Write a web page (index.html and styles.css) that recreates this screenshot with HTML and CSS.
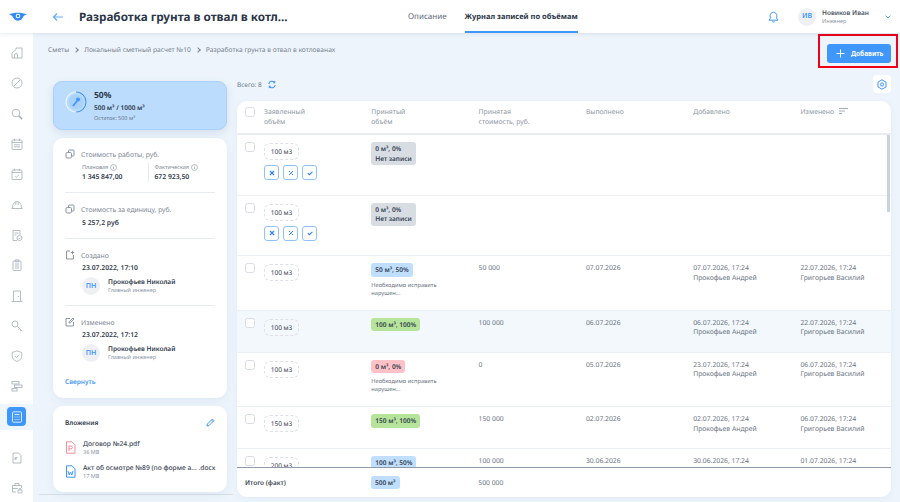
FILE: index.html
```html
<!DOCTYPE html>
<html lang="ru">
<head>
    <meta charset="UTF-8">
    <meta name="viewport" content="width=device-width, initial-scale=1.0">
    <title>Журнал записей по объёмам</title>
    <link rel="stylesheet" href="styles.css">
</head>
<body>

    <svg class="sprite" xmlns="http://www.w3.org/2000/svg">
        <symbol id="i-coins" viewBox="0 0 10 10"><rect x="1" y="3.5" width="5.5" height="5.5" rx="1.2" fill="none" stroke="currentColor"/><path d="M3.5 3V1.8q0-.8.8-.8h3.9q.8 0 .8.8v4.4q0 .8-.8.8H7" fill="none" stroke="currentColor"/></symbol>
        <symbol id="i-info" viewBox="0 0 8 8"><circle cx="4" cy="4" r="3.4" fill="none" stroke="currentColor" stroke-width=".7"/><path d="M4 3.5v2.4M4 2v.8" stroke="currentColor" stroke-width=".8"/></symbol>
        <symbol id="i-x" viewBox="0 0 8 8"><path d="M2 2l4 4M6 2L2 6" stroke="currentColor" stroke-width="1.2" fill="none"/></symbol>
        <symbol id="i-x2" viewBox="0 0 8 8"><path d="M2 2l1.3 1.3M6 6L4.7 4.7M6 2L2 6" stroke="currentColor" stroke-width="1" fill="none"/></symbol>
        <symbol id="i-ok" viewBox="0 0 8 8"><path d="M1.8 4.2l1.6 1.5L6.4 2.8" stroke="currentColor" stroke-width="1.1" fill="none"/></symbol>
    </svg>

    <div class="app">
        <!-- Шапка -->
        <header class="topbar">
            <div class="logo">
                <svg width="18" height="10" viewBox="0 0 18 10"><path d="M0 2.5C4 0 13 0 18 2.5 15 3 14.500 4 13.500 6 11.500 9.500 6.500 9.500 4.500 6 3.500 4 2.500 3 0 2.500z" fill="#2f8cf5"/><circle cx="9" cy="4" r="2.300" fill="#fff"/><circle cx="9" cy="4" r="1.300" fill="#2f8cf5"/></svg>
            </div>
            <svg class="back" width="12" height="10" viewBox="0 0 12 10"><path d="M11 5H1.500M5 1.500L1.500 5 5 8.500" fill="none" stroke="#62a9fb" stroke-width="1.200"/></svg>
            <h1 class="page-title">Разработка грунта в отвал в котл...</h1>
            <nav class="tabs">
                <a class="tab">Описание</a>
                <a class="tab tab-active">Журнал записей по объёмам</a>
            </nav>
            <svg class="bell" width="11" height="12" viewBox="0 0 11 12"><path d="M1 9.200h9L8.800 7.500V4.600C8.800 2.600 7.300 1.300 5.500 1.300S2.200 2.600 2.200 4.600v2.900zM4.200 10.600q1.300 1 2.600 0" fill="none" stroke="#3f96fb" stroke-width="1"/></svg>
            <div class="avatar">ИВ</div>
            <div class="user">
                <div class="user-name">Новиков Иван</div>
                <div class="user-role">Инженер</div>
            </div>
            <svg class="chev" width="6" height="4" viewBox="0 0 6 4"><path d="M.6.8L3 3 5.400.8" fill="none" stroke="#3f96fb" stroke-width="1"/></svg>
        </header>

        <div class="workspace">
            <!-- Боковое меню -->
            <aside class="sidebar">
                <div class="side-item"><svg viewBox="0 0 12 12"><path d="M1 6l4-3.500V1h6v10H1zM3.500 11V8q0-1.500 1.500-1.500T6.500 8v3"/></svg></div>
                <div class="side-item"><svg viewBox="0 0 12 12"><circle cx="6" cy="6" r="5"/><path d="M3 9l6-6"/></svg></div>
                <div class="side-item"><svg viewBox="0 0 12 12"><circle cx="5" cy="5" r="3.800"/><path d="M7.800 7.800l3.300 3.300" stroke-width="1.500"/></svg></div>
                <div class="side-item"><svg viewBox="0 0 12 12"><rect x="1" y="2" width="10" height="9.500" rx="1"/><path d="M1 4.500h10M3.500.8v2M8.500.8v2M3 6.800h6M3 8.800h6"/></svg></div>
                <div class="side-item"><svg viewBox="0 0 12 12"><rect x="1" y="2" width="10" height="9.500" rx="1"/><path d="M1 4.500h10M3.500.8v2M8.500.8v2M4 7.800l1.500 1.400L8 6.800"/></svg></div>
                <div class="side-item"><svg viewBox="0 0 12 12"><path d="M.5 9.500h11M1.500 9.500C1.500 5 3.500 2.500 6 2.500s4.500 2.500 4.500 7M4.800 2.800V6M7.200 2.800V6"/></svg></div>
                <div class="side-item"><svg viewBox="0 0 12 12"><path d="M6 11.500H2V1.500h7V6M3.500 4h4M3.500 6h2"/><circle cx="8.500" cy="9" r="2.500"/><path d="M7.500 9l.8.800 1.200-1.200"/></svg></div>
                <div class="side-item"><svg viewBox="0 0 12 12"><rect x="2" y="2" width="8" height="9.500" rx="1"/><rect x="4" y=".8" width="4" height="2" rx=".5"/><path d="M3.800 5h4.400M3.800 7h4.400M3.800 9h4.400"/></svg></div>
                <div class="side-item"><svg viewBox="0 0 12 12"><path d="M.5 11.500h11M2.500 11.500V1h7v10.500M7.500 6v1"/></svg></div>
                <div class="side-item"><svg viewBox="0 0 12 12"><circle cx="4" cy="4" r="3"/><path d="M6.200 6.200l5 5M8.500 8.500l-1.200 1.200M10 10l-1 1"/></svg></div>
                <div class="side-item"><svg viewBox="0 0 12 12"><path d="M6 .8l4.800 1.700V6c0 2.800-2.200 4.500-4.800 5.500C3.400 10.500 1.200 8.800 1.200 6V2.500zM4 6l1.500 1.500L8 4.800"/></svg></div>
                <div class="side-item"><svg viewBox="0 0 12 12"><rect x="1" y="1.500" width="7" height="2.500"/><rect x="3.500" y="5" width="7.500" height="2.500"/><rect x="1" y="8.500" width="5" height="2.500"/></svg></div>
                <div class="side-item side-active"><span class="side-btn"><svg viewBox="0 0 12 12"><rect x="1.500" y=".8" width="9" height="10.400" rx="1"/><path d="M3.500 3.500h5M3.500 6h1M5.500 6h1M7.500 6h1M3.500 8.500h1M5.500 8.500h1M7.500 8.500h1"/></svg></span></div>
                <div class="side-sep"></div>
                <div class="side-item"><svg viewBox="0 0 12 12"><path d="M2 1h5.500L10 3.500V11H2zM4 8V5.500h2.500M4 7h2"/></svg></div>
                <div class="side-item"><svg viewBox="0 0 12 12"><path d="M5 10H1.500V3.500h9V6M4 3.500V1.500h4v2M1.500 6.500H7"/><rect x="7" y="8" width="4" height="3" rx=".5"/><path d="M8 8V7q1-1.500 2 0v1"/></svg></div>
            </aside>

            <main class="content">
                <div class="content-top">
                    <div class="crumbs">
                        <span>Сметы</span><i class="crumb-sep"></i>
                        <span>Локальный сметный расчет №10</span><i class="crumb-sep"></i>
                        <span>Разработка грунта в отвал в котлованах</span>
                    </div>
                    <div class="add-wrap">
                        <button class="btn-add"><svg width="9" height="9" viewBox="0 0 9 9"><path d="M4.500.5v8M.5 4.500h8" stroke="#fff" stroke-width="1"/></svg>Добавить</button>
                        <span class="add-mark"></span>
                    </div>
                </div>

                <div class="columns">
                    <!-- Левая колонка -->
                    <section class="left">
                        <div class="progress-card">
                            <div class="ring">
                                <svg width="22" height="22" viewBox="0 0 22 22">
                                    <circle cx="11" cy="11" r="10" fill="none" stroke="#e8f3ff" stroke-width="1.200"/>
                                    <path d="M11 1a10 10 0 0 1 0 20" fill="none" stroke="#3f96fb" stroke-width="1.200"/>
                                    <circle cx="11" cy="11" r="7.500" fill="#a9d1fb"/>
                                    <path d="M8 15l4-5" stroke="#3f96fb" stroke-width="1.800"/>
                                    <circle cx="13" cy="8.500" r="2" fill="#3f96fb"/>
                                </svg>
                            </div>
                            <div>
                                <div class="progress-pct">50%</div>
                                <div class="progress-vol">500 м³ / 1000 м³</div>
                                <div class="progress-rest">Остаток: 500 м³</div>
                            </div>
                        </div>

                        <div class="info-card">
                            <div class="info-block">
                                <div class="info-head"><svg class="info-icon"><use href="#i-coins"/></svg>Стоимость работы, руб.</div>
                                <div class="cost-split">
                                    <div class="cost-col">
                                        <div class="cost-label">Плановая <svg class="hint"><use href="#i-info"/></svg></div>
                                        <div class="info-value">1 345 847,00</div>
                                    </div>
                                    <div class="cost-col cost-col-fact">
                                        <div class="cost-label">Фактическая <svg class="hint"><use href="#i-info"/></svg></div>
                                        <div class="info-value">672 923,50</div>
                                    </div>
                                </div>
                            </div>
                            <div class="info-block">
                                <div class="info-head"><svg class="info-icon"><use href="#i-coins"/></svg>Стоимость за единицу, руб.</div>
                                <div class="info-value info-indent">5 257,2 руб</div>
                            </div>
                            <div class="info-block">
                                <div class="info-head"><svg class="info-icon" viewBox="0 0 10 10"><path d="M5 1H1.500v8h7V5M7.500.8v3.500M5.800 2.500h3.400" fill="none" stroke="currentColor"/></svg>Создано</div>
                                <div class="info-value info-indent">23.07.2022, 17:10</div>
                                <div class="person">
                                    <div class="avatar">ПН</div>
                                    <div>
                                        <div class="person-name">Прокофьев Николай</div>
                                        <div class="person-role">Главный инженер</div>
                                    </div>
                                </div>
                            </div>
                            <div class="info-block">
                                <div class="info-head"><svg class="info-icon" viewBox="0 0 10 10"><path d="M5 1.500H1v7.500h7.500V5M4 6l.3-1.500L8 1l1 1-3.500 3.700z" fill="none" stroke="currentColor"/></svg>Изменено</div>
                                <div class="info-value info-indent">23.07.2022, 17:12</div>
                                <div class="person">
                                    <div class="avatar">ПН</div>
                                    <div>
                                        <div class="person-name">Прокофьев Николай</div>
                                        <div class="person-role">Главный инженер</div>
                                    </div>
                                </div>
                            </div>
                            <a class="collapse">Свернуть</a>
                        </div>

                        <div class="files-card">
                            <div class="files-head">
                                <span>Вложения</span>
                                <svg width="9" height="9" viewBox="0 0 9 9"><path d="M1 8l.4-2L6.300 1.100 7.900 2.700 3 7.600zM5.500 2l1.600 1.600" fill="none" stroke="#3f96fb" stroke-width="1"/></svg>
                            </div>
                            <div class="file">
                                <svg class="file-icon" viewBox="0 0 11 13"><path d="M1.500.8h5.500L10 3.800v8.400H1.500z" fill="#fff" stroke="#f78f9a"/><path d="M4 10V5h2q1.300 0 1.300 1.400T6 7.800H4" fill="none" stroke="#f78f9a"/></svg>
                                <div>
                                    <div class="file-name">Договор №24.pdf</div>
                                    <div class="file-size">36 MB</div>
                                </div>
                            </div>
                            <div class="file">
                                <svg class="file-icon" viewBox="0 0 11 13"><path d="M1.500.8h5.500L10 3.800v8.400H1.500z" fill="#fff" stroke="#3f96fb"/><path d="M3 6l1.200 4 1.300-3 1.300 3L8 6" fill="none" stroke="#3f96fb"/></svg>
                                <div>
                                    <div class="file-name">Акт об осмотре №89 (по форме а... .docx</div>
                                    <div class="file-size">17 MB</div>
                                </div>
                            </div>
                        </div>
                    </section>

                    <!-- Журнал -->
                    <section class="right">
                        <div class="right-top">
                            <div class="total-line">
                                <span>Всего: 8</span>
                                <svg width="8" height="9" viewBox="0 0 8 9"><path d="M.8 4A3.300 3.300 0 0 1 6.600 2.400M7.200 5A3.300 3.300 0 0 1 1.400 6.600" fill="none" stroke="#3f96fb" stroke-width="1.100"/><path d="M7.200.6v2.600H4.800M.8 8.400V5.800h2.400" fill="#3f96fb"/></svg>
                            </div>
                            <button class="btn-settings">
                                <svg width="10" height="11" viewBox="0 0 10 11"><path d="M5 .8l4 2.300v4.800l-4 2.300-4-2.300V3.100z" fill="none" stroke="#3f96fb" stroke-width="1"/><circle cx="5" cy="5.500" r="1.600" fill="none" stroke="#3f96fb" stroke-width="1"/></svg>
                            </button>
                        </div>

                        <div class="journal">
                            <div class="row row-head">
                                <span class="check"></span>
                                <div>Заявленный<br>объём</div>
                                <div>Принятый<br>объём</div>
                                <div>Принятая<br>стоимость, руб.</div>
                                <div>Выполнено</div>
                                <div>Добавлено</div>
                                <div>Изменено <svg class="sort" width="9" height="7" viewBox="0 0 9 7"><path d="M0 .5h9M0 3h6M0 5.500h3" stroke="#9aa3b0" stroke-width=".9"/></svg></div>
                            </div>

                            <div class="rows">
                                <div class="row row-actions">
                                    <span class="check"></span>
                                    <div>
                                        <span class="declared">100 м3</span>
                                        <div class="actions">
                                            <span class="act"><svg><use href="#i-x"/></svg></span>
                                            <span class="act"><svg><use href="#i-x2"/></svg></span>
                                            <span class="act"><svg><use href="#i-ok"/></svg></span>
                                        </div>
                                    </div>
                                    <div><span class="pill pill-gray">0 м³, 0%<br>Нет записи</span></div>
                                    <div></div><div></div><div></div><div></div>
                                </div>
                                <div class="row row-actions">
                                    <span class="check"></span>
                                    <div>
                                        <span class="declared">100 м3</span>
                                        <div class="actions">
                                            <span class="act"><svg><use href="#i-x"/></svg></span>
                                            <span class="act"><svg><use href="#i-x2"/></svg></span>
                                            <span class="act"><svg><use href="#i-ok"/></svg></span>
                                        </div>
                                    </div>
                                    <div><span class="pill pill-gray">0 м³, 0%<br>Нет записи</span></div>
                                    <div></div><div></div><div></div><div></div>
                                </div>
                                <div class="row row-note">
                                    <span class="check"></span>
                                    <div><span class="declared">100 м3</span></div>
                                    <div><span class="pill pill-blue">50 м³, 50%</span><p class="note">Необходимо исправить<br>нарушен...</p></div>
                                    <div>50 000</div>
                                    <div>07.07.2026</div>
                                    <div>07.07.2026, 17:24<br>Прокофьев Андрей</div>
                                    <div>22.07.2026, 17:24<br>Григорьев Василий</div>
                                </div>
                                <div class="row row-plain row-hover">
                                    <span class="check"></span>
                                    <div><span class="declared">100 м3</span></div>
                                    <div><span class="pill pill-green">100 м³, 100%</span></div>
                                    <div>100 000</div>
                                    <div>06.07.2026</div>
                                    <div>06.07.2026, 17:24<br>Прокофьев Андрей</div>
                                    <div>22.07.2026, 17:24<br>Григорьев Василий</div>
                                </div>
                                <div class="row row-note">
                                    <span class="check"></span>
                                    <div><span class="declared">100 м3</span></div>
                                    <div><span class="pill pill-red">0 м³, 0%</span><p class="note">Необходимо исправить<br>нарушен...</p></div>
                                    <div>0</div>
                                    <div>05.07.2026</div>
                                    <div>23.07.2026, 17:24<br>Прокофьев Андрей</div>
                                    <div>06.07.2026, 17:24<br>Григорьев Василий</div>
                                </div>
                                <div class="row row-plain">
                                    <span class="check"></span>
                                    <div><span class="declared">150 м3</span></div>
                                    <div><span class="pill pill-green">150 м³, 100%</span></div>
                                    <div>150 000</div>
                                    <div>02.07.2026</div>
                                    <div>02.07.2026, 17:24<br>Прокофьев Андрей</div>
                                    <div>06.07.2026, 17:24<br>Григорьев Василий</div>
                                </div>
                                <div class="row row-plain">
                                    <span class="check"></span>
                                    <div><span class="declared">200 м3</span></div>
                                    <div><span class="pill pill-blue">100 м³, 50%</span></div>
                                    <div>100 000</div>
                                    <div>30.06.2026</div>
                                    <div>30.06.2026, 17:24</div>
                                    <div>01.07.2026, 17:24</div>
                                </div>
                                <span class="scroll-thumb"></span>
                            </div>

                            <div class="row row-foot">
                                <span></span>
                                <div class="foot-label">Итого (факт)</div>
                                <div></div>
                                <div><span class="pill pill-blue">500 м³</span></div>
                                <div>500 000</div>
                                <div></div><div></div><div></div>
                            </div>
                        </div>
                    </section>
                </div>
            </main>
        </div>
    </div>

</body>
</html>
```

FILE: styles.css
```css
* {
    box-sizing: border-box;
}
html, body {
    margin: 0;
    height: 100%;
    overflow: hidden;
}
body {
    font-family: "Noto Sans", "Open Sans", sans-serif;
    font-size: 7px;
    color: #2b3648;
    background-color: #edf4fb;
    text-rendering: geometricPrecision;
}
.sprite {
    display: none;
}
.app {
    display: flex;
    flex-direction: column;
    height: 502px;
}

/* Шапка */
.topbar {
    position: relative;
    z-index: 2;
    display: flex;
    align-items: center;
    flex: none;
    height: 33px;
    background-color: #fff;
    box-shadow: 0 1px 4px rgba(60, 80, 110, 0.12);
}
.logo {
    display: flex;
    width: 52px;
    padding-left: 9px;
}
.back {
    flex: none;
    margin-right: 15px;
}
.page-title {
    width: 329px;
    margin: 0;
    font-size: 11.700px;
    font-weight: 700;
    color: #2b3648;
    white-space: nowrap;
}
.tabs {
    display: flex;
    align-self: stretch;
    gap: 18px;
    width: 360px;
}
.tab {
    display: flex;
    align-items: center;
    font-size: 8px;
    color: #5b6676;
    border-bottom: 2px solid transparent;
    padding-top: 2px;
}
.tab-active {
    font-size: 7.500px;
    font-weight: 700;
    color: #2b3648;
    border-bottom-color: #3f96fb;
}
.bell {
    flex: none;
    margin-right: 19px;
}
.avatar {
    display: flex;
    align-items: center;
    justify-content: center;
    flex: none;
    width: 18px;
    height: 18px;
    border-radius: 50%;
    font-size: 7px;
    font-weight: 600;
    color: #3f96fb;
    background-color: #eef0f4;
}
.user {
    width: 63px;
    margin-left: 6px;
}
.user-name {
    font-size: 6.500px;
    font-weight: 600;
    line-height: 9px;
    color: #47505f;
}
.user-role {
    font-size: 5.500px;
    line-height: 9px;
    color: #8c95a3;
}

/* Боковое меню */
.workspace {
    display: flex;
    flex: 1;
    min-height: 0;
}
.sidebar {
    display: flex;
    flex-direction: column;
    align-items: stretch;
    flex: none;
    width: 33px;
    padding-top: 5px;
    background-color: #fff;
}
.side-item {
    display: flex;
    align-items: center;
    justify-content: center;
    flex: none;
    height: 30.300px;
}
.side-item svg {
    width: 12px;
    height: 12px;
    fill: none;
    stroke: #a3adba;
    stroke-width: 0.800;
}
.side-active {
    height: 26px;
    margin: 2px 0;
    background-color: #eef5fc;
}
.side-btn {
    display: flex;
    align-items: center;
    justify-content: center;
    width: 19px;
    height: 19px;
    border-radius: 4px;
    background-color: #3f96fb;
}
.side-btn svg {
    stroke: #fff;
}
.side-sep {
    height: 1px;
    margin: 6px 0 5px;
    background-color: #e3e7ec;
}

.content {
    flex: 1;
    min-width: 0;
    padding: 11px 9px 5px 6px;
}
.content-top {
    display: flex;
    justify-content: space-between;
    height: 19px;
    padding-left: 9px;
}
.crumbs {
    display: flex;
    align-items: center;
    height: 11px;
    font-size: 6.700px;
    color: #78828f;
}
.crumb-sep {
    width: 4px;
    height: 4px;
    margin: 0 6px 0 5px;
    border-top: 0.800px solid #78828f;
    border-right: 0.800px solid #78828f;
    transform: rotate(45deg);
}
.add-wrap {
    position: relative;
}
.btn-add {
    display: flex;
    align-items: center;
    gap: 6px;
    width: 64px;
    height: 19px;
    padding: 0 0 0 9px;
    border: none;
    border-radius: 3px;
    font-family: inherit;
    font-size: 6.500px;
    font-weight: 700;
    color: #fff;
    background-color: #3f96fb;
}
.add-mark {
    position: absolute;
    left: -9px;
    top: -10px;
    width: 80px;
    height: 34px;
    border: 2px solid #ee0018;
}
.columns {
    display: flex;
    gap: 4px;
    margin-top: 12px;
}

/* Левая колонка */
.left {
    flex: none;
    width: 194px;
    height: 420px;
    padding: 6px 6px 0 14px;
    border-bottom: 1px solid #d9dee5;
}
.progress-card {
    display: flex;
    align-items: center;
    gap: 7px;
    height: 49px;
    padding-left: 11px;
    border: 1px solid #a9d1fb;
    border-radius: 9px;
    background-color: #bcdcfd;
    box-shadow: 0 3px 8px rgba(70, 110, 170, 0.15);
}
.ring {
    display: flex;
    flex: none;
    margin-bottom: 8px;
}
.progress-pct {
    font-size: 8.500px;
    font-weight: 700;
    line-height: 12px;
}
.progress-vol {
    font-size: 6.500px;
    font-weight: 600;
    line-height: 12px;
}
.progress-rest {
    font-size: 5.500px;
    line-height: 8px;
    color: #68778c;
}
.info-card,
.files-card {
    margin-top: 8px;
    padding: 0 12px;
    border-radius: 10px;
    background-color: #fff;
    box-shadow: 0 3px 8px rgba(70, 110, 170, 0.08);
}
.info-card {
    height: 260px;
    padding-top: 11px;
}
.info-block {
    padding-bottom: 10px;
    margin-bottom: 11px;
    border-bottom: 1px solid #e8ebef;
}
.info-block:nth-child(3) {
    padding-bottom: 10px;
}
.info-block:nth-child(4) {
    padding-bottom: 0;
    border-bottom: none;
}
.info-head {
    display: flex;
    align-items: center;
    gap: 6px;
    height: 10px;
    font-size: 6.800px;
    color: #7d8694;
}
.info-icon {
    flex: none;
    width: 10px;
    height: 10px;
    color: #8b95a3;
}
.info-value {
    margin-top: 3px;
    font-size: 6.800px;
    font-weight: 600;
    line-height: 10px;
    color: #2f3a4b;
}
.info-indent {
    margin: 4px 0 0 17px;
}
.info-block:nth-child(3) .info-indent,
.info-block:nth-child(4) .info-indent {
    margin-top: 3px;
}
.cost-split {
    display: flex;
    margin: 4px 0 0 17px;
}
.cost-col {
    width: 67px;
}
.cost-col-fact {
    padding-left: 5px;
    border-left: 1px solid #e8ebef;
}
.cost-label {
    display: flex;
    align-items: center;
    gap: 2px;
    font-size: 5.500px;
    line-height: 8px;
    color: #7d8694;
}
.hint {
    width: 7px;
    height: 7px;
    color: #8b95a3;
}
.cost-col .info-value {
    margin-top: 1px;
}
.person {
    display: flex;
    align-items: center;
    gap: 8px;
    margin: 4px 0 0 17px;
}
.person-name {
    font-size: 6.500px;
    font-weight: 600;
    line-height: 9px;
}
.person-role {
    font-size: 5.500px;
    line-height: 9px;
    color: #8c95a3;
}
.collapse {
    display: block;
    margin-top: 15px;
    font-size: 6.500px;
    font-weight: 600;
    color: #3f96fb;
}
.files-card {
    height: 86px;
    padding-top: 11px;
}
.files-head {
    display: flex;
    align-items: center;
    justify-content: space-between;
    height: 10px;
    margin-bottom: 8px;
    font-size: 6.500px;
    font-weight: 600;
}
.file {
    display: flex;
    align-items: center;
    gap: 7px;
    height: 24px;
    white-space: nowrap;
}
.file-icon {
    flex: none;
    width: 11px;
    height: 13px;
    fill: none;
}
.file-name {
    font-size: 6.700px;
    font-weight: 500;
    line-height: 9px;
    color: #3a4454;
}
.file-size {
    font-size: 5.500px;
    line-height: 8px;
    color: #8c95a3;
}

/* Журнал */
.right {
    flex: 1;
    min-width: 0;
}
.right-top {
    display: flex;
    align-items: center;
    justify-content: space-between;
    height: 18px;
    margin-bottom: 8px;
}
.total-line {
    display: flex;
    align-items: center;
    gap: 6px;
    font-size: 6.500px;
    color: #6f7a89;
}
.btn-settings {
    display: flex;
    align-items: center;
    justify-content: center;
    width: 18px;
    height: 18px;
    padding: 0;
    border: none;
    border-radius: 4px;
    background-color: #fff;
}
.journal {
    display: flex;
    flex-direction: column;
    height: 396px;
    border-radius: 10px;
    background-color: #fff;
    overflow: hidden;
    box-shadow: 0 2px 6px rgba(70, 110, 170, 0.06);
}
.row {
    display: grid;
    grid-template-columns: 27px repeat(6, 107.300px);
    flex: none;
    font-size: 6.800px;
    line-height: 9.800px;
    color: #6a7483;
    padding-top: 7px;
    border-bottom: 1px solid #edf0f4;
}
.row-head {
    height: 34px;
    padding-top: 6px;
    color: #8e97a4;
    border-bottom: 2px solid #e9ecf1;
}
.row-actions {
    height: 60.500px;
}
.row-note {
    height: 54.500px;
}
.row-plain {
    height: 42px;
}
.row-hover {
    background-color: #f3f8fc;
}
.rows {
    position: relative;
    flex: 1;
    min-height: 0;
    overflow: hidden;
}
.check {
    display: block;
    width: 10px;
    height: 10px;
    margin-left: 8px;
    border: 1px solid #d8dde4;
    border-radius: 2.500px;
    background-color: #fff;
}
.sort {
    margin-left: 3px;
    vertical-align: -1px;
}
.declared {
    display: inline-block;
    width: 35px;
    height: 17px;
    margin-top: 1px;
    border: 1px dashed #dde1e7;
    border-radius: 6px;
    font-size: 6.500px;
    line-height: 15px;
    text-align: center;
    color: #3a4454;
}
.actions {
    display: flex;
    gap: 4px;
    margin-top: 5px;
}
.act {
    display: flex;
    align-items: center;
    justify-content: center;
    width: 15px;
    height: 15px;
    border: 1px solid #8fc2fb;
    border-radius: 3px;
    color: #2f84ea;
}
.act svg {
    width: 8px;
    height: 8px;
}
.pill {
    display: inline-block;
    padding: 2px 4px;
    border-radius: 3px;
    font-size: 6.500px;
    font-weight: 600;
    line-height: 9.500px;
    color: #333e4f;
}
.pill-gray {
    background-color: #d8dce3;
}
.pill-blue {
    background-color: #c0dffe;
}
.pill-green {
    background-color: #b6e49a;
}
.pill-red {
    background-color: #ffc1c8;
}
.note {
    margin: 4px 0 0;
    font-size: 5.700px;
    line-height: 8px;
    color: #677180;
}
.scroll-thumb {
    position: absolute;
    top: 0;
    right: 1px;
    width: 3px;
    height: 77px;
    background-color: #c9d3df;
}
.row-foot {
    height: 30px;
    align-items: center;
    padding-top: 0;
    border-top: 1px solid #8f9bab;
    border-bottom: none;
    grid-template-columns: 8px 27px 99px 107.300px 107.300px 107.300px 107.300px 1fr;
}
.foot-label {
    font-weight: 600;
    font-size: 6.500px;
    color: #39434f;
    white-space: nowrap;
}
```
